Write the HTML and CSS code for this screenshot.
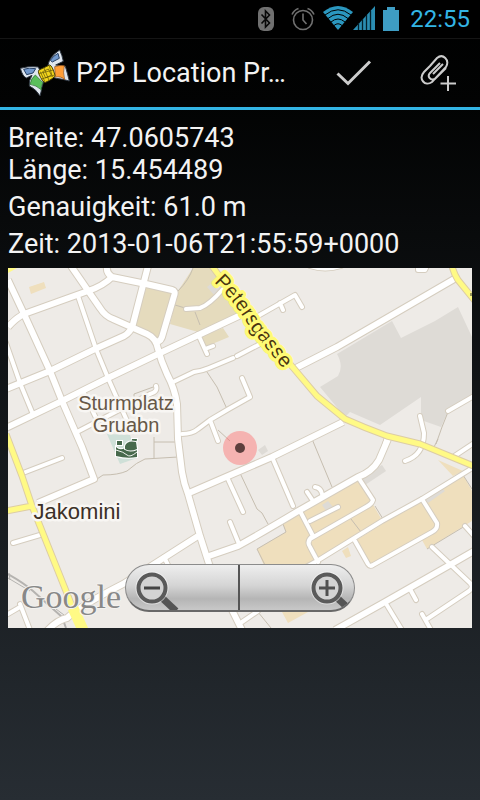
FILE: index.html
```html
<!DOCTYPE html>
<html lang="de">
<head>
<meta charset="utf-8">
<meta name="viewport" content="width=device-width, initial-scale=1">
<title>P2P Location Pr…</title>
<link rel="stylesheet" href="styles.css">
</head>
<body>
<div class="status">
  <svg class="bt" width="16" height="24" viewBox="0 0 16 24" aria-hidden="true"><rect width="16" height="24" rx="6" fill="#707070"/><path d="M3.500 7.500l8 8.500-4 4V4l4 4-8 8.500" fill="none" stroke="#080808" stroke-width="1.600"/></svg>
  <svg class="alarm" width="24" height="24" viewBox="0 0 24 24" aria-hidden="true" fill="none" stroke="#707070" stroke-width="1.600"><circle cx="12" cy="13" r="9.500"/><path d="M12 6.500V13l3.500 4M1 7.500Q3 3 7.500 1.500M16.500 1.500Q21 3 23 7.500"/></svg>
  <svg class="wifi" width="30" height="24" viewBox="0 0 30 24" aria-hidden="true"><path d="M0 6Q15-6 30 6L15 24z" fill="#2b97bf"/><g fill="none" stroke="#000" stroke-width="1"><path d="M2 9Q15-1.500 28 9M5 12.500Q15 4 25 12.500M8 16Q15 10 22 16M11 19.500Q15 16 19 19.500"/></g></svg>
  <svg class="signal" width="22" height="24" viewBox="0 0 22 24" aria-hidden="true"><path d="M0 24L22 0V24z" fill="#2b8db2"/><path d="M5.500 17v7M9.500 13v11M13.500 9v15M17.500 5v19" stroke="#03202c" stroke-width="1.300"/></svg>
  <svg class="battery" width="16" height="24" viewBox="0 0 16 24" aria-hidden="true"><path d="M4 0h8v3h4v21H0V3h4z" fill="#3e9dc4"/></svg>
  <time class="clock">22:55</time>
</div>
<header class="bar">
  <svg class="logo" width="50" height="48" viewBox="15 15 150 144" aria-hidden="true">
    <g stroke="#303843" stroke-width="3" fill="#dfe6ee" stroke-linejoin="round">
      <path d="M78 88L70 69Q45 64 16 73Q23 98 34 102L51 94Q40 112 43 126Q64 136 75 156Q79 142 80 132L85 115z"/>
      <path d="M98 68Q102 38 134 18Q142 35 145 52L122 63L151 67Q158 90 163 111Q142 105 124 103L108 98z"/>
    </g>
    <path d="M26 76Q42 70 62 74L54 87L35 92z" fill="#7299cd" stroke="#263f63" stroke-width="3"/>
    <path d="M106 49Q114 36 129 28L133 43L112 54z" fill="#7299cd" stroke="#263f63" stroke-width="3"/>
    <path d="M61 93L84 116Q76 128 80 138Q63 123 45 121Q48 103 61 93z" fill="#5abf5c" stroke="#24652b" stroke-width="2"/>
    <path d="M119 68Q135 63 148 65Q143 85 149 107Q139 96 121 99z" fill="#ff9e38" stroke="#8c4c15" stroke-width="2"/>
    <path d="M72 78L104 63Q112 65 120 94Q119 102 92 115Q83 117 71 88Q69 80 72 78z" fill="#f2d51c" stroke="#4a4205" stroke-width="3"/>
    <path d="M87 72L102 109M71 89L115 78M79 105L119 93M83 83l17-8 9 18-17 9zM103 65l9 34M76 83l13 29" fill="none" stroke="#5c5009" stroke-width="2"/>
  </svg>
  <h1>P2P Location Pr…</h1>
  <button class="action" aria-label="Bestätigen"><svg width="36" height="28" viewBox="0 0 36 28"><path d="M1.500 14.500L12 24.500L34 2.500" fill="none" stroke="#ccc" stroke-width="3"/></svg></button>
  <button class="action clip" aria-label="Anhang hinzufügen"><svg width="36" height="38" viewBox="0 0 36 38" fill="none" stroke="#ccc" stroke-width="2"><path d="M11 11L4 18C-2 25 5 33 12 28L26 13C30 6 23-1 17 4L10 12M26 14L15 25C10 27 7 22 10 19L20 9M23 10L13 20"/><path d="M28 22v15M20.500 29.500H36"/></svg></button>
</header>
<main>
  <div class="facts">
    <p class="pair">Breite: 47.0605743<br>Länge: 15.454489</p>
    <p>Genauigkeit: 61.0 m</p>
    <p>Zeit: 2013-01-06T21:55:59+0000</p>
  </div>
  <section class="map" aria-label="Karte">
    <svg class="tiles" viewBox="8 269 464 360">
      <defs>
        <g id="main-roads">
          <path d="M8 281L24 315L50 372L62 402L82 448L94 480L38 504"/>
          <path d="M8 328Q16 319 24 315L88 292Q103 287 112 278Q106 274 107 268M112 278L146 285L172 291Q176 292 174 297L162 338Q160 344 154 342"/>
          <path d="M71 267L100 309Q105 317 113 320L147 335Q156 339 158 350Q161 362 167 375Q175 390 177 405L178 440L182 473Q184 485 188 495L200 537L209 565L233 613L242 631"/>
          <path d="M148 267L133 325Q131 333 124 337L95 350L50 372L6 390M6 429L62 402L108 379L158 355L243 315"/>
          <path d="M456 279L337 348L296 369M189 494L272 458L343 423"/>
          <path d="M209 557L238 547Q265 532 300 511L358 478Q372 473 379 461L388 440M198 537L123 585Q80 607 67 619Q57 621 46 633"/>
          <path d="M474 552L448 567L385 603L335 631"/>
        </g>
        <g id="side-roads">
          <path d="M78 297L96 350L108 379L128 424M6 344L20 384L32 413M77 433L150 395Q158 393 156 387M83 392L97 421"/>
          <path d="M171 384L194 373Q202 372 209 369L233 359M237 357L262 344M182 435Q192 435 198 430L210 421Q230 409 250 398L242 379M210 421L218 442"/>
          <path d="M198 335L207 355M205 350L213 347M186 310L200 309Q209 306 223 290M258 317L295 296L302 308M280 304L283 311"/>
          <path d="M23 474L62 459M13 544L40 536M8 615L20 608M20 605L30 631"/>
          <path d="M227 478L243 513M272 458L293 507M230 523L239 545M164 558L170 570M242 623L258 612"/>
          <path d="M474 468L422 500L382 522L317 562L286 579M358 478L373 501Q372 505 366 508L310 540M310 522L338 508M300 512L313 537Q306 542 310 548L318 563"/>
          <path d="M422 500L437 524Q438 530 432 533L373 566Q370 568 368 565L355 542"/>
          <path d="M432 548L470 584Q474 588 469 592L427 620M422 615L431 631M385 603L402 631M410 590L416 601M465 527L474 537"/>
          <path d="M420 417L424 434Q424 456 405 462M448 412L474 397M453 458L474 444M315 488Q321 489 322 495M307 493L313 502M387 438L384 448"/>
          <path d="M418 267V271H425L427 267M310 267Q325 272 341 267"/>
        </g>
        <g id="yellow-roads">
          <path d="M212 267L250 319L290 365L317 397L345 420Q365 429 387 437L420 445L476 468M452 267Q454 275 458 281L475 302M6 435L22 477L32 507L72 607L83 633M6 512L32 507"/>
        </g>
        <path id="petersgasse" d="M214 283Q235 303 250 329L290 378"/>
      </defs>
      <rect x="8" y="269" width="464" height="360" fill="#eeebe7"/>
      <path fill="#e5dbbd" d="M147 287L175 293L160 340L133 328zM193 269L178 292L170 325L198 333L243 315L212 269zM202 337L223 329L229 338L205 348z"/>
      <path fill="#dedbd6" d="M392 322L401 339L435 322L458 308L472 338V398L448 412L441 428L421 421V398L380 426L350 413L345 418L320 388L338 377Q344 367 337 355zM207 288L217 280L225 288L215 297zM258 451l7-5 3 6-6 4z"/>
      <path fill="#efdfbd" d="M29 288L44 283L46 289L31 295zM257 550L286 533L283 525L300 513L358 480L382 521L318 560L290 576H268zM355 542L422 500L463 476L472 492V522L427 550L422 541L370 567zM438 461L463 472L453 477zM342 552L348 548L351 557L346 559zM282 613L288 624L308 613z"/>
      <path fill="#dedbd6" d="M362 477L382 466L386 472L365 486zM425 500L440 488L445 492L428 504zM322 506L328 502L333 508L327 513z"/>
      <path fill="#cfe0d8" d="M107 435L120 465L137 459L130 436z"/>
      <g fill="none" stroke="#c6beb0">
        <path d="M193 269Q189 281 178 292M175 306L185 309M195 313L200 326M207 373Q211 379 217 388L227 410M240 474L257 510L262 514L268 525M97 480L103 476Q118 476 127 472Q137 463 145 460L178 458M154 438V459M154 443H177M134 407V395L156 387M312 440L332 488M438 440L434 448M448 413L442 428L436 445M218 431L230 442M258 613L271 629M283 525L286 533L257 550L265 566M351 520L361 533M375 507L383 520M463 476L472 490M427 550L465 527"/>
      </g>
      <g fill="none" stroke-linejoin="round">
        <path d="M8 575Q24 584 33 592T62 618L66 629" stroke="#b5b3b0" stroke-width="2"/>
        <path d="M8 579L30 592M9 574l1 7M56 610l8 6" stroke="#b5b3b0"/>
        <use href="#side-roads" stroke="#d5cdbf" stroke-width="6" stroke-linecap="round"/>
        <use href="#main-roads" stroke="#d5cdbf" stroke-width="8"/>
        <use href="#side-roads" stroke="#fff" stroke-width="4" stroke-linecap="round"/>
        <use href="#main-roads" stroke="#fff" stroke-width="6"/>
        <use href="#yellow-roads" stroke="#ddcda5" stroke-width="7"/>
        <use href="#yellow-roads" stroke="#fffa85" stroke-width="5"/>
        <path d="M73 609L83 631" stroke="#fffa85" stroke-width="11"/>
      </g>
      <path fill="#fffa85" d="M8 269h9l-9 5z"/>
      <g fill="#47694c" stroke="#fff" stroke-width="2" paint-order="stroke">
        <path d="M116 448Q120 452 125 449Q131 454 137 449V458Q127 460 116 457zM117 442h5v4h-5zM132 440h5l-1 5h-5z"/>
        <path d="M125 447Q127 441 136 443L137 450Q130 453 125 450z"/>
      </g>
      <path d="M116 451Q124 453 127 456T137 453" fill="none" stroke="#eef3ee"/>
      <text class="street"><textPath href="#petersgasse">Petersgasse</textPath></text>
      <text class="place" x="126" y="411">Sturmplatz</text>
      <text class="place" x="126" y="433">Gruabn</text>
      <text class="district" x="77" y="520">Jakomini</text>
      <text class="brand" x="21" y="609">Google</text>
      <circle cx="240" cy="449" r="17" fill="#f66" fill-opacity=".42"/>
      <circle cx="240" cy="449" r="5" fill="#5d3f3d"/>
      <path d="M471 294v3" stroke="#333"/>
    </svg>
    <div class="zoom">
      <button class="out" aria-label="Verkleinern"><svg width="44" height="46" viewBox="0 0 44 46"><path d="M25 31L41 46" stroke="#555" stroke-width="7"/><circle cx="17" cy="23" r="13.500" fill="#d6d6d6" stroke="#fff" stroke-width="6" stroke-opacity=".5"/><circle cx="17" cy="23" r="13.500" fill="#d3d3d3" stroke="#5a5a5a" stroke-width="4"/><path d="M9 23h16" stroke="#444" stroke-width="3"/></svg></button>
      <button class="in" aria-label="Vergrößern"><svg width="44" height="46" viewBox="0 0 44 46"><path d="M25 31L38 43" stroke="#555" stroke-width="7"/><circle cx="17" cy="23" r="13.500" fill="#d6d6d6" stroke="#fff" stroke-width="6" stroke-opacity=".5"/><circle cx="17" cy="23" r="13.500" fill="#d3d3d3" stroke="#5a5a5a" stroke-width="4"/><path d="M9 23h16M17 15v16" stroke="#505050" stroke-width="3"/></svg></button>
    </div>
  </section>
</main>
</body>
</html>
```
FILE: styles.css
```css
* { box-sizing: border-box; }
html { min-height: 100%; background: linear-gradient(#000 0, #020303 13%, #272d33 100%); }
body { margin: 0; color: #f3f3f3; font-family: Roboto, "Noto Sans", sans-serif; font-size: 27px; }
svg { display: block; }
.status { display: flex; align-items: center; justify-content: flex-end; height: 38px; padding: 0 10px; background: #000; }
.bt { margin-right: 17px; }
.alarm { margin-right: 8px; }
.wifi, .signal { margin-top: -2px; }
.battery { margin: 0 11px 0 8px; }
.clock { color: #33b5e5; font-size: 24px; line-height: 40px; }
.bar { display: flex; align-items: center; height: 72px; padding: 0 8px 0 20px; border-top: 1px solid #151515; border-bottom: 3px solid #33b5e5; }
.logo { flex: none; margin-right: 6px; }
h1 { flex: 1; min-width: 0; margin: 0; font-size: 27px; font-weight: 400; line-height: 36px; white-space: nowrap; }
.action { display: grid; place-items: center; flex: none; width: 100px; height: 68px; padding: 0; border: 0; background: none; }
.clip { width: 68px; }
.facts { padding: 12px 8px 4px; }
.facts p { margin: 0 0 5px; line-height: 32px; }
.facts p:last-child { margin: 0; }
main { padding-bottom: 16px; }
.map { position: relative; margin: 4px 8px 0; }
.tiles { width: 100%; height: auto; }
.tiles text { font-family: "Liberation Sans", Arial, sans-serif; paint-order: stroke; stroke-linejoin: round; }
.tiles .place { fill: #675847; font-size: 20px; stroke: #f8f6f3; stroke-width: 5px; text-anchor: middle; }
.tiles .district { fill: #3c3028; font-size: 22px; stroke: #f8f6f3; stroke-width: 5px; text-anchor: middle; }
.tiles .street { fill: #4a3510; font-size: 20px; stroke: #fffa75; stroke-width: 7px; }
.tiles .brand { fill: #888; font-family: "Liberation Serif", "Times New Roman", serif; font-size: 34px; stroke: #f4f2ef; stroke-width: 2px; }
.zoom { position: absolute; bottom: 16px; left: 50%; display: flex; width: 230px; height: 48px; overflow: hidden; border: 1px solid #8b8b8b; border-bottom: 2px solid #686868; border-radius: 24px; background: linear-gradient(#eee, #d5d5d5 45%, #b5b5b5 75%, #c8c8c8); transform: translateX(-50%); }
.zoom button { display: flex; align-items: center; width: 50%; padding: 0; border: 0; background: none; }
.zoom .out { padding-left: 9px; border-right: 2px solid #555; }
.zoom .in { justify-content: flex-end; }
```
